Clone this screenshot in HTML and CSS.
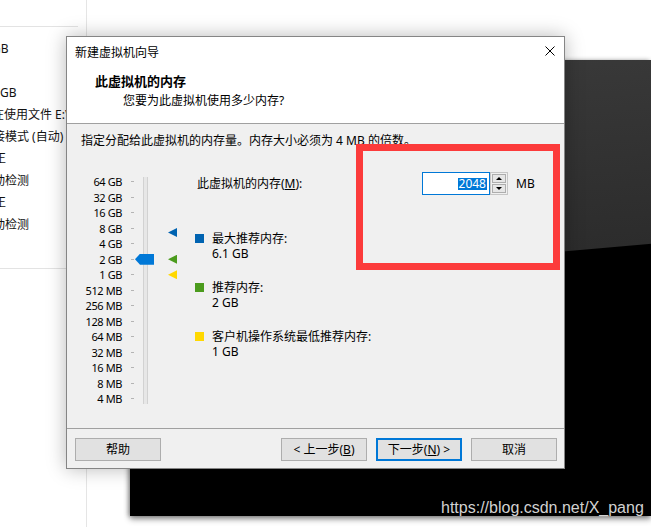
FILE: index.html
```html
<!DOCTYPE html>
<html lang="zh-CN">
<head>
<meta charset="utf-8">
<title>新建虚拟机向导</title>
<link rel="stylesheet" href="styles.css">
</head>
<body>
<div class="desktop">
  <aside class="app-pane">
    <div class="pane-top"></div>
    <ul class="pane-lines">
      <li class="cut-8">GB</li>
      <li>&nbsp;</li>
      <li>GB</li>
      <li class="cut-8">在使用文件 E:\Virtual Machines</li>
      <li class="cut-19">桥接模式 (自动)</li>
      <li class="cut-6">正</li>
      <li class="cut-19">自动检测</li>
      <li class="cut-6">正</li>
      <li class="cut-19">自动检测</li>
    </ul>
    <div class="pane-rule"></div>
  </aside>

  <div class="vm-screen"></div>

  <section class="dialog">
    <div class="titlebar">
      <span class="title">新建虚拟机向导</span>
      <svg class="close" width="10" height="10" viewBox="0 0 10 10" aria-label="关闭">
        <path d="M0.5 0.5 L9.5 9.5 M9.5 0.5 L0.5 9.5" stroke="#000" stroke-width="1" fill="none"/>
      </svg>
    </div>
    <header class="header">
      <h1>此虚拟机的内存</h1>
      <p>您要为此虚拟机使用多少内存?</p>
    </header>
    <div class="content">
      <p class="desc">指定分配给此虚拟机的内存量。内存大小必须为 4 MB 的倍数。</p>
      <div class="mem-row">
        <div class="scale">
          <span class="lv">64 GB</span><i class="tick"></i>
          <span class="lv">32 GB</span><i class="tick"></i>
          <span class="lv">16 GB</span><i class="tick"></i>
          <span class="lv">8 GB</span><i class="tick"></i>
          <span class="lv">4 GB</span><i class="tick"></i>
          <span class="lv">2 GB</span><i class="tick"></i>
          <span class="lv">1 GB</span><i class="tick"></i>
          <span class="lv">512 MB</span><i class="tick"></i>
          <span class="lv">256 MB</span><i class="tick"></i>
          <span class="lv">128 MB</span><i class="tick"></i>
          <span class="lv">64 MB</span><i class="tick"></i>
          <span class="lv">32 MB</span><i class="tick"></i>
          <span class="lv">16 MB</span><i class="tick"></i>
          <span class="lv">8 MB</span><i class="tick"></i>
          <span class="lv">4 MB</span><i class="tick"></i>
          <div class="track"></div>
          <div class="thumb"></div>
          <div class="mark mark-max"></div>
          <div class="mark mark-rec"></div>
          <div class="mark mark-min"></div>
        </div>
        <div class="settings">
          <div class="mem-field">
            <label class="mem-label">此虚拟机的内存(<u>M</u>):</label>
            <div class="spin">
              <div class="spin-input"><span class="sel">2048</span></div>
              <div class="spin-btns">
                <span class="spin-btn"><i class="arrow-up"></i></span>
                <span class="spin-btn"><i class="arrow-down"></i></span>
              </div>
            </div>
            <span class="unit">MB</span>
          </div>
          <ul class="legend">
            <li><span class="sq sq-max"></span><div>最大推荐内存:<br>6.1 GB</div></li>
            <li><span class="sq sq-rec"></span><div>推荐内存:<br>2 GB</div></li>
            <li><span class="sq sq-min"></span><div>客户机操作系统最低推荐内存:<br>1 GB</div></li>
          </ul>
        </div>
      </div>
      <div class="highlight"></div>
    </div>
    <footer class="footer">
      <button class="btn help">帮助</button>
      <button class="btn">&lt; 上一步(<u>B</u>)</button>
      <button class="btn default">下一步(<u>N</u>) &gt;</button>
      <button class="btn">取消</button>
    </footer>
  </section>

  <div class="watermark">https://blog.csdn.net/X_pang</div>
</div>
</body>
</html>
```
FILE: styles.css
```css
* { box-sizing: border-box; }

html, body {
  margin: 0;
  padding: 0;
  background: #fff;
}

body {
  font-family: "Noto Sans", "Noto Sans CJK SC", sans-serif;
  font-size: 12px;
  color: #000;
}

.desktop {
  position: relative;
  width: 651px;
  height: 527px;
  overflow: hidden;
  background: #fff;
}

/* ---------- background application pane ---------- */
.app-pane {
  width: 87px;
  height: 527px;
  border-right: 1px solid #e5e5e5;
  display: flex;
  flex-direction: column;
}

.pane-top {
  height: 27px;
  margin-right: 8px;
  border-bottom: 1px solid #e3e3e3;
}

.pane-lines {
  list-style: none;
  margin: 0;
  padding: 11px 0 0 0;
}

.pane-lines li {
  line-height: 22px;
  height: 22px;
  white-space: nowrap;
  overflow: hidden;
  color: #111;
}

.cut-6 { text-indent: -6px; }
.cut-8 { text-indent: -8px; }
.cut-19 { text-indent: -19px; }

.pane-rule {
  margin-top: 32px;
  margin-right: 8px;
  border-top: 1px solid #e3e3e3;
}

/* ---------- VM screen window behind the dialog ---------- */
.vm-screen {
  position: absolute;
  left: 130px;
  top: 60px;
  width: 521px;
  height: 456px;
  background: linear-gradient(175deg, #3b3b3b 0, #2c2c2c 228px, #000 229px, #000 100%);
  box-shadow: 0 3px 6px rgba(0, 0, 0, 0.45), -2px 0 4px rgba(0, 0, 0, 0.25);
}

/* ---------- dialog ---------- */
.dialog {
  position: absolute;
  left: 66px;
  top: 36px;
  width: 499px;
  height: 433px;
  border: 1px solid #858585;
  background: #f0f0f0;
  display: flex;
  flex-direction: column;
  box-shadow: 0 0 18px rgba(0, 0, 0, 0.28);
}

.titlebar {
  height: 30px;
  background: #fff;
  display: flex;
  align-items: center;
  justify-content: space-between;
  padding: 0 9px 0 8px;
}

.title {
  line-height: 17px;
}

.close {
  display: block;
  margin-top: -2px;
}

.header {
  height: 57px;
  background: #fff;
  border-bottom: 1px solid #a0a0a0;
  padding: 6px 0 0 28px;
}

.header h1 {
  margin: 0;
  font-size: 13px;
  font-weight: bold;
  line-height: 17px;
}

.header p {
  margin: 2px 0 0 28px;
  line-height: 17px;
}

.content {
  position: relative;
  flex: 1;
  padding: 8px 0 0 14px;
}

.desc {
  margin: 0;
  line-height: 17px;
}

.mem-row {
  display: flex;
  align-items: flex-start;
  margin-top: 23px;
}

/* ---------- slider scale ---------- */
.scale {
  margin-top: 2px;
  display: grid;
  grid-template-columns: 41px 9px 3px 1px 19px 14px 9px;
  grid-template-rows: repeat(15, 15.5px);
}

.lv {
  grid-column: 1;
  text-align: right;
  font-size: 11px;
  letter-spacing: -0.4px;
  line-height: 15.5px;
  white-space: nowrap;
}

.tick {
  grid-column: 3;
  align-self: center;
  height: 1px;
  background: #b4b4b4;
}

.track {
  grid-column: 5;
  grid-row: 1 / -1;
  width: 5px;
  margin: 3px 0 3px 8px;
  background: #e7e7e7;
  border-left: 1px solid #d2d2d2;
  border-right: 1px solid #d2d2d2;
}

.thumb {
  grid-column: 5;
  grid-row: 6;
  align-self: center;
  width: 19px;
  height: 11px;
  background: #0078d7;
  clip-path: polygon(0 50%, 5px 0, 100% 0, 100% 100%, 5px 100%);
}

.mark {
  grid-column: 7;
  width: 9px;
  height: 9px;
  clip-path: polygon(0 50%, 100% 0, 100% 100%);
}

.mark-max {
  grid-row: 4;
  align-self: start;
  margin-top: 7.5px;
  background: #0063b1;
}

.mark-rec {
  grid-row: 6;
  align-self: center;
  background: #4b9b1d;
}

.mark-min {
  grid-row: 7;
  align-self: center;
  background: #ffd800;
}

/* ---------- settings ---------- */
.settings {
  margin-left: 18px;
  display: flex;
  flex-direction: column;
}

.mem-field {
  display: flex;
  align-items: center;
  height: 23px;
}

.mem-label {
  width: 227px;
  padding-left: 2px;
  line-height: 17px;
}

.spin {
  display: flex;
  height: 23px;
}

.spin-input {
  width: 68px;
  height: 23px;
  border: 1px solid #0078d7;
  background: #fff;
  display: flex;
  justify-content: flex-end;
  align-items: center;
  padding-right: 2px;
}

.sel {
  background: #0078d7;
  color: #fff;
  line-height: 12px;
  height: 12px;
  padding: 0 1px;
  font-size: 12px;
}

.spin-btns {
  width: 18px;
  height: 23px;
  border: 1px solid #c6c6c6;
  padding: 1px;
  display: flex;
  flex-direction: column;
  gap: 1px;
  background: #f0f0f0;
}

.spin-btn {
  flex: 1;
  border: 1px solid #adadad;
  background: #e6e6e6;
  display: flex;
  align-items: center;
  justify-content: center;
}

.arrow-up {
  width: 0;
  height: 0;
  border-left: 3px solid transparent;
  border-right: 3px solid transparent;
  border-bottom: 3px solid #000;
}

.arrow-down {
  width: 0;
  height: 0;
  border-left: 3px solid transparent;
  border-right: 3px solid transparent;
  border-top: 3px solid #000;
}

.unit {
  margin-left: 8px;
  line-height: 17px;
}

.legend {
  list-style: none;
  margin: 36px 0 0 0;
  padding: 0;
  display: flex;
  flex-direction: column;
  gap: 19px;
}

.legend li {
  display: flex;
  align-items: flex-start;
  gap: 8px;
  line-height: 15px;
}

.sq {
  width: 9px;
  height: 9px;
  margin-top: 3px;
  flex: none;
}

.sq-max { background: #0063b1; }
.sq-rec { background: #4b9b1d; }
.sq-min { background: #ffd800; }

/* red annotation frame */
.highlight {
  position: absolute;
  left: 289px;
  top: 20px;
  width: 204px;
  height: 126px;
  border: 7px solid #fc3b3b;
}

/* ---------- footer ---------- */
.footer {
  height: 40px;
  border-top: 1px solid #a0a0a0;
  padding: 9px 7px 0 8px;
  display: flex;
  align-items: flex-start;
  gap: 9px;
}

.btn {
  width: 86px;
  height: 23px;
  margin: 0;
  padding: 0;
  border: 1px solid #adadad;
  background: #e1e1e1;
  font-family: "Noto Sans", "Noto Sans CJK SC", sans-serif;
  font-size: 12px;
  line-height: 19px;
  color: #000;
  text-align: center;
}

.btn.help {
  margin-right: auto;
}

.btn.default {
  border: 2px solid #0078d7;
  line-height: 17px;
}

/* ---------- watermark ---------- */
.watermark {
  position: absolute;
  left: 441px;
  top: 499px;
  font-family: "Liberation Sans", Arial, sans-serif;
  font-size: 16px;
  line-height: 18px;
  color: #d2d2d2;
  white-space: nowrap;
}
```
